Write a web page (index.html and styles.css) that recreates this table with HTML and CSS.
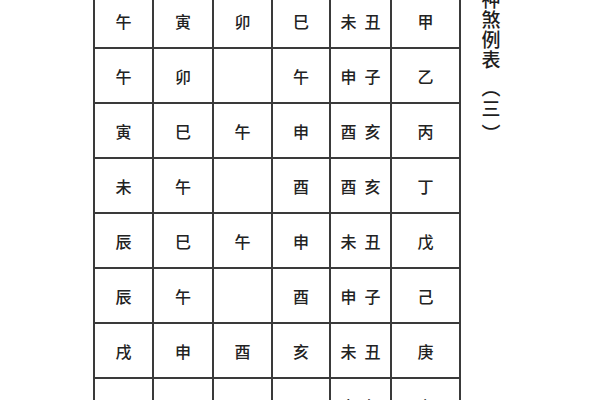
FILE: index.html
```html
<!DOCTYPE html>
<html lang="zh">
<head>
<meta charset="utf-8">
<link rel="stylesheet" href="styles.css">
</head>
<body>
<div class="page">
  <div class="grid">
    <div class="c">午</div><div class="c">寅</div><div class="c">卯</div><div class="c">巳</div><div class="c pair"><span>未</span><span>丑</span></div><div class="c">甲</div>
    <div class="c">午</div><div class="c">卯</div><div class="c"></div><div class="c">午</div><div class="c pair"><span>申</span><span>子</span></div><div class="c">乙</div>
    <div class="c">寅</div><div class="c">巳</div><div class="c">午</div><div class="c">申</div><div class="c pair"><span>酉</span><span>亥</span></div><div class="c">丙</div>
    <div class="c">未</div><div class="c">午</div><div class="c"></div><div class="c">酉</div><div class="c pair"><span>酉</span><span>亥</span></div><div class="c">丁</div>
    <div class="c">辰</div><div class="c">巳</div><div class="c">午</div><div class="c">申</div><div class="c pair"><span>未</span><span>丑</span></div><div class="c">戊</div>
    <div class="c">辰</div><div class="c">午</div><div class="c"></div><div class="c">酉</div><div class="c pair"><span>申</span><span>子</span></div><div class="c">己</div>
    <div class="c">戌</div><div class="c">申</div><div class="c">酉</div><div class="c">亥</div><div class="c pair"><span>未</span><span>丑</span></div><div class="c">庚</div>
    <div class="c">酉</div><div class="c">酉</div><div class="c"></div><div class="c">子</div><div class="c pair"><span>寅</span><span>午</span></div><div class="c">辛</div>
  </div>
  <div class="title">
    <span>神</span><span>煞</span><span>例</span><span>表</span><span class="po">︵</span><span class="num">三</span><span class="pc">︶</span>
  </div>
</div>
</body>
</html>
```
FILE: styles.css
```css
html, body {
  margin: 0;
  padding: 0;
  background: #ffffff;
  overflow: hidden;
  width: 600px;
  height: 400px;
}
.page {
  display: flex;
  align-items: flex-start;
  font-family: "Noto Sans CJK SC", "Noto Sans CJK TC", sans-serif;
  color: #222222;
}
.grid {
  display: grid;
  grid-template-columns: 57px 58px 57px 56px 59px 67px;
  grid-auto-rows: 53px;
  gap: 2px;
  padding: 2px;
  background: #3a3a3a;
  margin-left: 93px;
  margin-top: -8px;
}
.c {
  background: #ffffff;
  display: flex;
  align-items: center;
  justify-content: center;
  font-size: 16px;
  font-weight: 500;
  line-height: 1;
}
.pair {
  gap: 8px;
}
.title {
  display: flex;
  flex-direction: column;
  align-items: center;
  width: 22px;
  margin-left: 19px;
  margin-top: -11px;
  font-size: 19px;
  font-weight: 500;
  line-height: 20px;
  color: #1e1e1e;
}
.title span {
  display: block;
  height: 20px;
}
.title .po {
  margin-top: 8px;
}
.title .num {
  margin-top: 1px;
}
.title .pc {
  margin-top: 5px;
}
```
